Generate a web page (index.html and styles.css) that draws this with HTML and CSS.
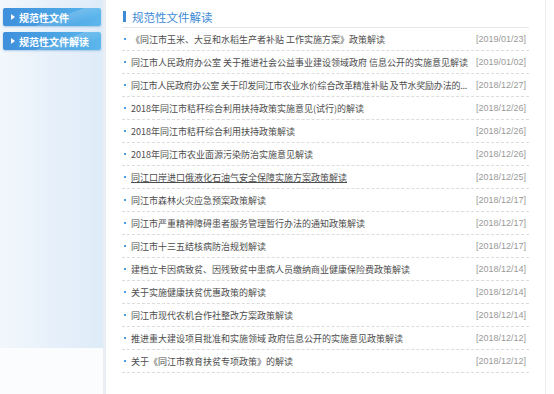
FILE: index.html
```html
<!DOCTYPE html>
<html lang="zh-CN">
<head>
<meta charset="utf-8">
<title>规范性文件解读</title>
<link rel="stylesheet" href="styles.css">
</head>
<body>
<div class="page">
  <aside class="side">
    <div class="side-bg">
      <a class="nav-btn" href="#"><span class="tri"></span>规范性文件</a>
      <a class="nav-btn" href="#"><span class="tri"></span>规范性文件解读</a>
    </div>
  </aside>
  <main class="content">
    <h2 class="title"><span class="bar"></span>规范性文件解读</h2>
    <ul class="list">
      <li><span class="dot"></span><a class="txt" href="#">《同江市玉米、大豆和水稻生产者补贴 工作实施方案》政策解读</a><span class="date">[2019/01/23]</span></li>
      <li><span class="dot"></span><a class="txt" href="#">同江市人民政府办公室 关于推进社会公益事业建设领域政府 信息公开的实施意见解读</a><span class="date">[2019/01/02]</span></li>
      <li><span class="dot"></span><a class="txt tight" href="#">同江市人民政府办公室 关于印发同江市农业水价综合改革精准补贴 及节水奖励办法的...</a><span class="date">[2018/12/27]</span></li>
      <li><span class="dot"></span><a class="txt" href="#">2018年同江市秸秆综合利用扶持政策实施意见(试行)的解读</a><span class="date">[2018/12/26]</span></li>
      <li><span class="dot"></span><a class="txt" href="#">2018年同江市秸秆综合利用扶持政策解读</a><span class="date">[2018/12/26]</span></li>
      <li><span class="dot"></span><a class="txt" href="#">2018年同江市农业面源污染防治实施意见解读</a><span class="date">[2018/12/26]</span></li>
      <li><span class="dot"></span><a class="txt hover" href="#">同江口岸进口俄液化石油气安全保障实施方案政策解读</a><span class="date">[2018/12/25]</span></li>
      <li><span class="dot"></span><a class="txt" href="#">同江市森林火灾应急预案政策解读</a><span class="date">[2018/12/17]</span></li>
      <li><span class="dot"></span><a class="txt" href="#">同江市严重精神障碍患者服务管理暂行办法的通知政策解读</a><span class="date">[2018/12/17]</span></li>
      <li><span class="dot"></span><a class="txt" href="#">同江市十三五结核病防治规划解读</a><span class="date">[2018/12/17]</span></li>
      <li><span class="dot"></span><a class="txt" href="#">建档立卡因病致贫、因残致贫中患病人员缴纳商业健康保险费政策解读</a><span class="date">[2018/12/14]</span></li>
      <li><span class="dot"></span><a class="txt" href="#">关于实施健康扶贫优惠政策的解读</a><span class="date">[2018/12/14]</span></li>
      <li><span class="dot"></span><a class="txt" href="#">同江市现代农机合作社整改方案政策解读</a><span class="date">[2018/12/14]</span></li>
      <li><span class="dot"></span><a class="txt" href="#">推进重大建设项目批准和实施领域 政府信息公开的实施意见政策解读</a><span class="date">[2018/12/12]</span></li>
      <li><span class="dot"></span><a class="txt" href="#">关于《同江市教育扶贫专项政策》的解读</a><span class="date">[2018/12/12]</span></li>
    </ul>
  </main>
</div>
</body>
</html>
```
FILE: styles.css
```css
* { box-sizing: border-box; }
html, body { margin: 0; padding: 0; }
body {
  width: 554px;
  height: 394px;
  overflow: hidden;
  background: #ffffff;
  font-family: "Noto Sans CJK SC", "Liberation Sans", sans-serif;
}
.page {
  display: flex;
  height: 394px;
}
.side {
  width: 103px;
  flex: none;
  background: #fbfcfd;
}
.side-bg {
  height: 348px;
  padding: 8px 2px 0 3px;
  display: flex;
  flex-direction: column;
  gap: 6px;
  background: linear-gradient(to right, #f2f7fc 0%, #e6f0fa 55%, #deebf8 100%);
}
.nav-btn {
  display: flex;
  align-items: center;
  height: 18px;
  padding-left: 8px;
  border-radius: 2px;
  color: #ffffff;
  font-size: 10px;
  font-weight: bold;
  text-decoration: none;
  background:
    linear-gradient(160deg, rgba(255,255,255,0) 55%, rgba(255,255,255,0.18) 56%, rgba(255,255,255,0) 80%),
    linear-gradient(to right, #3e8fdc 0%, #4aa2e3 50%, #5cb7ec 100%);
  box-shadow: 0 1px 2px rgba(60, 120, 190, 0.35);
}
.tri {
  width: 0;
  height: 0;
  border-left: 4px solid #ffffff;
  border-top: 3px solid transparent;
  border-bottom: 3px solid transparent;
  margin-right: 4px;
}
.content {
  width: 443px;
  flex: none;
  border-left: 3px solid #eaeef2;
  border-right: 1px solid #ececec;
  padding: 0 16px 0 16px;
}
.title {
  margin: 0;
  height: 28px;
  display: flex;
  align-items: center;
  padding: 6px 0 0 1px;
  border-bottom: 1px solid #e6e6e6;
  color: #3d8bd6;
  font-size: 11.5px;
  font-weight: normal;
}
.bar {
  width: 3px;
  height: 11px;
  background: #3d8bd6;
  margin-right: 6px;
}
.list {
  list-style: none;
  margin: 0;
  padding: 0;
}
.list li {
  display: flex;
  align-items: center;
  height: 23px;
  padding: 0 3px 0 2px;
  border-bottom: 1px dashed #dcdcdc;
}
.dot {
  width: 2px;
  height: 2px;
  background: #4a9de0;
  flex: none;
  margin-right: 5px;
}
.txt {
  color: #4d4d4d;
  font-size: 9px;
  text-decoration: none;
  white-space: nowrap;
  flex: none;
}
.txt.tight {
  letter-spacing: -0.2px;
}
.txt.hover {
  text-decoration: underline;
}
.date {
  margin-left: auto;
  padding-left: 2px;
  color: #9a9a9a;
  font-size: 9px;
  font-family: "Liberation Sans", sans-serif;
  flex: none;
}
```
